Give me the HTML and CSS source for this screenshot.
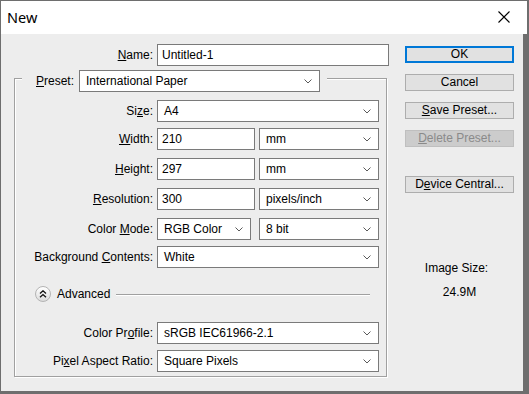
FILE: index.html
```html
<!DOCTYPE html>
<html lang="en">
<head>
  <meta charset="UTF-8">
  <title>New</title>
  <link rel="stylesheet" href="styles.css">
</head>
<body>
  <div class="window">
    <!-- Title bar -->
    <div class="titlebar">
      <span class="title">New</span>
      <svg class="close" width="12" height="12" viewBox="0 0 12 12">
        <path d="M0.5 0.5 L11.5 11.5 M11.5 0.5 L0.5 11.5" stroke="#000" stroke-width="1.1" fill="none"/>
      </svg>
    </div>

    <div class="dialog">
      <!-- Left: form -->
      <div class="form">
        <div class="row name-row">
          <span class="label name-label"><u>N</u>ame:</span>
          <div class="field name-field">Untitled-1</div>
        </div>

        <div class="group">
          <div class="legend">
            <span class="legend-label"><u>P</u>reset:</span>
            <div class="select preset-select">International Paper<svg class="chev" width="8" height="5" viewBox="0 0 8 5"><polyline points="0.5,0.5 4,4 7.5,0.5"/></svg></div>
          </div>

          <div class="row">
            <span class="label">Si<u>z</u>e:</span>
            <div class="select full">A4<svg class="chev" width="8" height="5" viewBox="0 0 8 5"><polyline points="0.5,0.5 4,4 7.5,0.5"/></svg></div>
          </div>
          <div class="row">
            <span class="label"><u>W</u>idth:</span>
            <div class="field num">210</div>
            <div class="select unit">mm<svg class="chev" width="8" height="5" viewBox="0 0 8 5"><polyline points="0.5,0.5 4,4 7.5,0.5"/></svg></div>
          </div>
          <div class="row gap8">
            <span class="label"><u>H</u>eight:</span>
            <div class="field num">297</div>
            <div class="select unit">mm<svg class="chev" width="8" height="5" viewBox="0 0 8 5"><polyline points="0.5,0.5 4,4 7.5,0.5"/></svg></div>
          </div>
          <div class="row gap8">
            <span class="label"><u>R</u>esolution:</span>
            <div class="field num">300</div>
            <div class="select unit">pixels/inch<svg class="chev" width="8" height="5" viewBox="0 0 8 5"><polyline points="0.5,0.5 4,4 7.5,0.5"/></svg></div>
          </div>
          <div class="row gap8">
            <span class="label">Color <u>M</u>ode:</span>
            <div class="select mode">RGB Color<svg class="chev" width="8" height="5" viewBox="0 0 8 5"><polyline points="0.5,0.5 4,4 7.5,0.5"/></svg></div>
            <div class="select unit bits">8 bit<svg class="chev" width="8" height="5" viewBox="0 0 8 5"><polyline points="0.5,0.5 4,4 7.5,0.5"/></svg></div>
          </div>
          <div class="row">
            <span class="label">Background <u>C</u>ontents:</span>
            <div class="select full">White<svg class="chev" width="8" height="5" viewBox="0 0 8 5"><polyline points="0.5,0.5 4,4 7.5,0.5"/></svg></div>
          </div>

          <!-- Advanced section -->
          <div class="advanced">
            <span class="adv-toggle">
              <svg width="8" height="8" viewBox="0 0 8 8"><polyline points="1,3.5 4,0.8 7,3.5"/><polyline points="1,7.2 4,4.5 7,7.2"/></svg>
            </span>
            <span class="adv-text">Advanced</span>
            <span class="adv-line"></span>
          </div>

          <div class="row profile-row">
            <span class="label">Color Pr<u>o</u>file:</span>
            <div class="select full">sRGB IEC61966-2.1<svg class="chev" width="8" height="5" viewBox="0 0 8 5"><polyline points="0.5,0.5 4,4 7.5,0.5"/></svg></div>
          </div>
          <div class="row">
            <span class="label">Pi<u>x</u>el Aspect Ratio:</span>
            <div class="select full">Square Pixels<svg class="chev" width="8" height="5" viewBox="0 0 8 5"><polyline points="0.5,0.5 4,4 7.5,0.5"/></svg></div>
          </div>
        </div>
      </div>

      <!-- Right: buttons -->
      <div class="side">
        <div class="button default">OK</div>
        <div class="button">Cancel</div>
        <div class="button"><u>S</u>ave Preset...</div>
        <div class="button disabled"><u>D</u>elete Preset...</div>
        <div class="button device">D<u>e</u>vice Central...</div>
        <div class="image-size">Image Size:</div>
        <div class="image-value">24.9M</div>
      </div>
    </div>
  </div>
</body>
</html>
```

FILE: styles.css
```css
html, body {
  margin: 0;
  padding: 0;
}

body {
  width: 529px;
  height: 394px;
  overflow: hidden;
  background-color: #6e6e6e;
  font-family: 'Liberation Sans', Arial, sans-serif;
  font-size: 12px;
  color: #000;
}

u {
  text-decoration: underline;
  text-underline-offset: 1px;
}

.window {
  margin: 1px 0 0 1px;
  width: 522px;
  height: 390px;
  background-color: #ededed;
}

/* Title bar */
.titlebar {
  display: flex;
  align-items: center;
  justify-content: space-between;
  width: 526px;
  height: 33px;
  background-color: #fff;
  box-sizing: border-box;
  padding: 0 17px 0 6px;
}

.title {
  font-family: 'Noto Sans', sans-serif;
  font-size: 14.5px;
  color: #000;
  margin-top: -1px;
}

.close {
  display: block;
  margin-top: -1px;
}

/* Dialog body */
.dialog {
  display: flex;
  padding: 10px 0 0 13px;
  gap: 16px;
}

.form {
  width: 375px;
}

.row {
  display: flex;
  align-items: center;
  gap: 4px;
  height: 22px;
  margin-top: 6px;
}

.row.gap8 {
  margin-top: 8px;
}

.name-row {
  margin-top: 0;
}

.label {
  width: 138px;
  flex-shrink: 0;
  text-align: right;
  white-space: nowrap;
}

.name-label {
  width: 139px;
}

.field, .select {
  position: relative;
  box-sizing: border-box;
  height: 22px;
  line-height: 20px;
  background-color: #fff;
  border: 1px solid #7a7a7a;
  white-space: nowrap;
}

.field {
  padding-left: 4px;
}

.select {
  padding-left: 6px;
}

.chev {
  position: absolute;
  right: 7px;
  top: 8px;
}

.chev polyline {
  fill: none;
  stroke: #5a5a5a;
  stroke-width: 1;
}

.name-field {
  width: 232px;
}

.full {
  width: 222px;
}

.num {
  width: 98px;
}

.unit {
  width: 120px;
}

.mode {
  width: 94px;
}

.bits {
  margin-left: 4px;
}

/* Group box */
.group {
  position: relative;
  margin-top: 12px;
  width: 373px;
  box-sizing: border-box;
  border: 1px solid #a0a0a0;
  box-shadow: inset 1px 1px 0 #fff, 1px 1px 0 #fff;
  padding: 15px 0 4px 0;
}

.legend {
  position: absolute;
  top: -9px;
  left: 7px;
  display: flex;
  align-items: center;
  gap: 5px;
  padding: 0 7px 0 14px;
  background-color: #ededed;
}

.preset-select {
  width: 241px;
}

.legend + .row {
  margin-top: 6px;
}

/* Advanced */
.advanced {
  display: flex;
  align-items: center;
  height: 16px;
  margin-top: 18px;
  padding: 0 16px 0 20px;
}

.adv-toggle {
  display: flex;
  align-items: center;
  justify-content: center;
  width: 16px;
  height: 16px;
  box-sizing: border-box;
  border-radius: 50%;
  border: 1px solid #b4b4b4;
  background: linear-gradient(#ffffff, #dcdcdc);
}

.adv-toggle svg polyline {
  fill: none;
  stroke: #111;
  stroke-width: 1.3;
}

.adv-text {
  margin-left: 6px;
}

.adv-line {
  flex: 1;
  height: 1px;
  margin-left: 6px;
  background-color: #a0a0a0;
  box-shadow: 0 1px 0 #fff;
}

.profile-row {
  margin-top: 20px;
}

/* Buttons */
.side {
  display: flex;
  flex-direction: column;
  width: 109px;
  padding-top: 2px;
}

.button {
  box-sizing: border-box;
  height: 17px;
  line-height: 15px;
  margin-bottom: 11px;
  text-align: center;
  background-color: #e1e1e1;
  border: 1px solid #adadad;
  white-space: nowrap;
}

.button.default {
  border-color: #0078d7;
  box-shadow: inset 0 0 0 1px #0078d7;
}

.button.disabled {
  background-color: #cccccc;
  border-color: #bfbfbf;
  color: #8a8a8a;
}

.button.device {
  margin-top: 18px;
}

.image-size {
  margin-top: 57px;
  text-align: center;
  margin-left: -6px;
  line-height: 14px;
}

.image-value {
  margin-top: 10px;
  text-align: center;
  line-height: 14px;
}
```
